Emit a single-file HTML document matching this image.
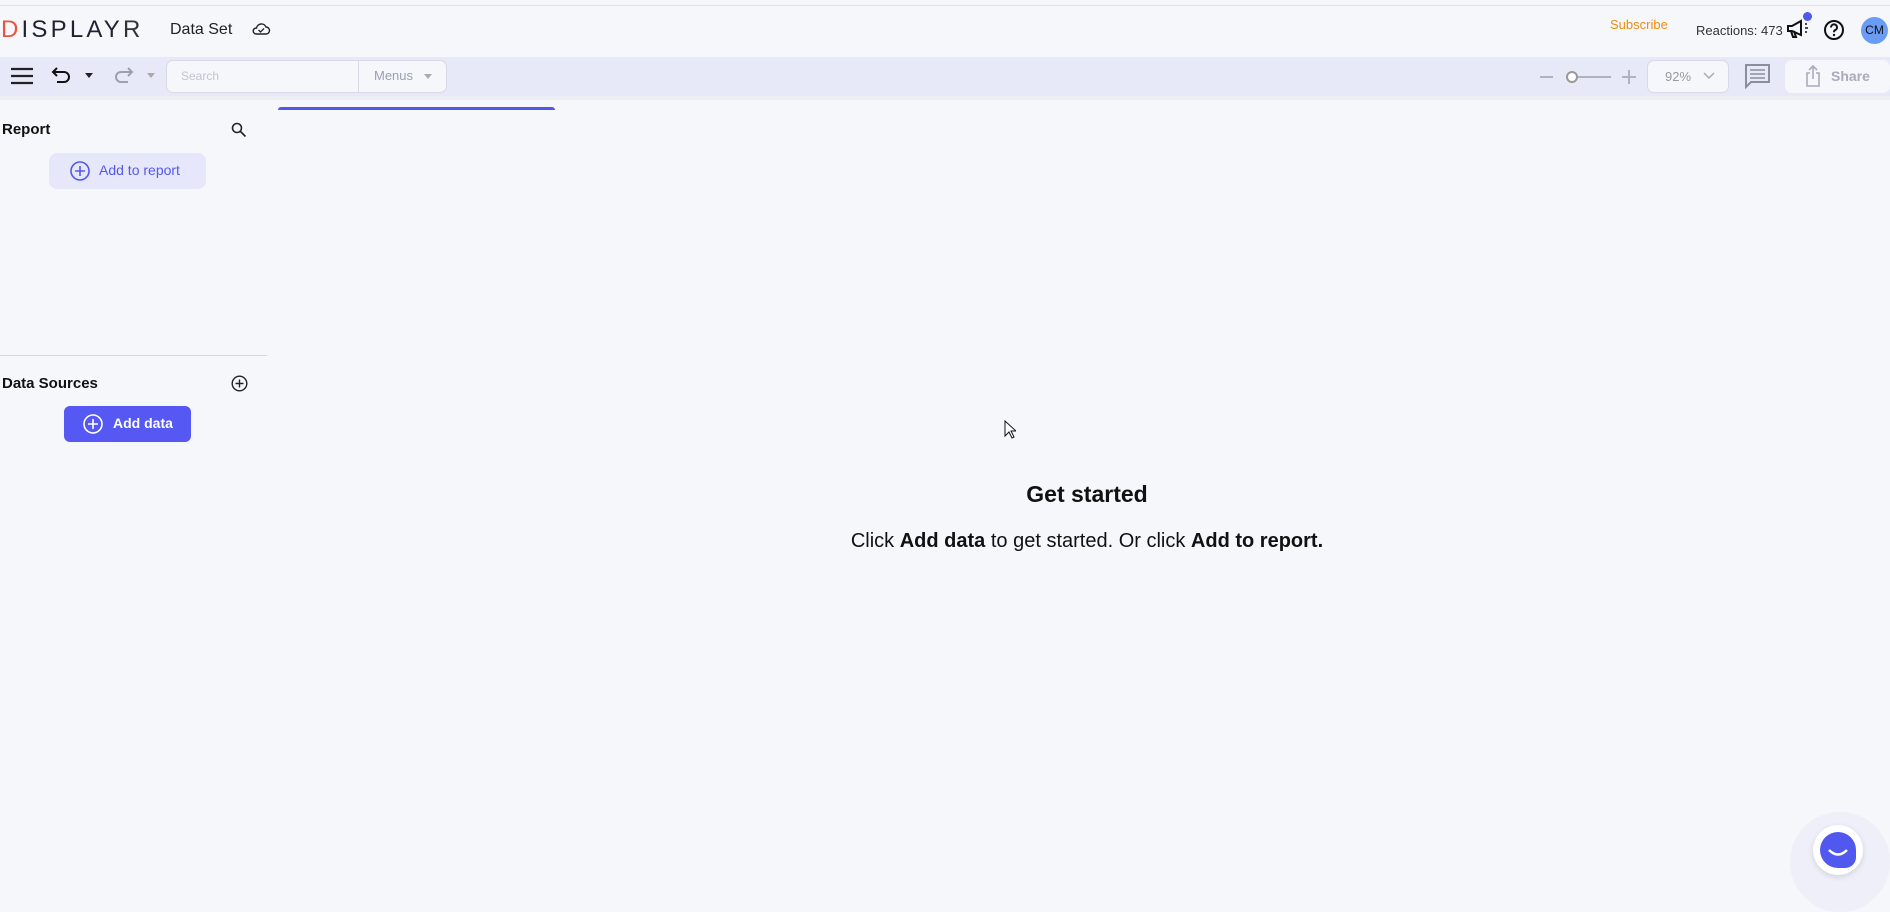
<!DOCTYPE html>
<html><head><meta charset="utf-8"><style>
*{margin:0;padding:0;box-sizing:border-box}
body{width:1890px;height:881px;background:#f6f7fb;font-family:"Liberation Sans",sans-serif;position:relative;overflow:hidden;color:#111}
.a{position:absolute}
</style></head><body>
<div class="a" style="left:0;top:5px;width:1890px;height:1px;background:#e2e3ea"></div>
<!-- logo -->
<div class="a" style="left:1px;top:15px;font-size:24px;letter-spacing:3.2px;color:#1e2330;line-height:30px;white-space:nowrap"><span style="color:#e8553f">D</span>ISPLAY<span style="font-weight:300;color:#333">R</span></div>
<div class="a" style="left:170px;top:21px;font-size:16px;color:#222">Data Set</div>
<svg class="a" style="left:251px;top:21px" width="20" height="16" viewBox="0 0 20 16"><path d="M5 13h10a3.5 3.5 0 0 0 0-7 5 5 0 0 0-9.5 1A3 3 0 0 0 5 13z" fill="none" stroke="#222" stroke-width="1.4"/><path d="M7.5 9l2 2 3.5-3.5" fill="none" stroke="#222" stroke-width="1.3"/></svg>
<div class="a" style="left:1610px;top:17px;font-size:13px;color:#f08c10">Subscribe</div>
<div class="a" style="left:1696px;top:23px;font-size:13px;color:#333">Reactions: 473</div>
<svg class="a" style="left:1786px;top:18px" width="24" height="22" viewBox="0 0 24 22"><path d="M2 8h4l9-5v14l-9-4H2z" fill="none" stroke="#111" stroke-width="2"/><path d="M5 13l2 6h3l-2-6" fill="none" stroke="#111" stroke-width="2"/><path d="M19 6h2M19 10h3M19 14h2" stroke="#111" stroke-width="1.5"/></svg>
<div class="a" style="left:1803px;top:12px;width:9px;height:9px;border-radius:50%;background:#5058f0"></div>
<svg class="a" style="left:1823px;top:19px" width="22" height="22" viewBox="0 0 22 22"><circle cx="11" cy="11" r="9" fill="none" stroke="#111" stroke-width="2"/><path d="M8 8.5a3 3 0 1 1 4 2.7c-.8.4-1 1-1 2" fill="none" stroke="#111" stroke-width="2"/><circle cx="11" cy="16" r="1.2" fill="#111"/></svg>
<div class="a" style="left:1861px;top:17px;width:27px;height:27px;border-radius:50%;background:#6a9cf5;font-size:12px;line-height:27px;text-align:center;color:#111">CM</div>
<!-- toolbar -->
<div class="a" style="left:0;top:57px;width:1890px;height:39px;background:#e8e9f8"></div>
<div class="a" style="left:0;top:96px;width:1890px;height:4px;background:#eceef3"></div>
<svg class="a" style="left:10px;top:67px" width="24" height="18"><path d="M1 2h22M1 9h22M1 16h22" stroke="#222" stroke-width="2.2"/></svg>
<svg class="a" style="left:51px;top:65px" width="22" height="20" viewBox="0 0 22 20"><path d="M6 3L2 7l4 4M2 7h11a5 5 0 0 1 0 10H6" fill="none" stroke="#111" stroke-width="2"/></svg>
<div class="a" style="left:85px;top:73px;border:4px solid transparent;border-top:5px solid #222"></div>
<svg class="a" style="left:112px;top:65px" width="22" height="20" viewBox="0 0 22 20"><path d="M16 3l4 4-4 4M20 7H9a5 5 0 0 0 0 10h7" fill="none" stroke="#9aa0b0" stroke-width="2"/></svg>
<div class="a" style="left:147px;top:73px;border:4px solid transparent;border-top:5px solid #aaa"></div>
<div class="a" style="left:166px;top:60px;width:281px;height:33px;border:1px solid #d8d9e4;border-radius:7px;background:#f6f7fb"></div>
<div class="a" style="left:358px;top:60px;width:1px;height:33px;background:#d8d9e4"></div>
<div class="a" style="left:181px;top:69px;font-size:12px;color:#c0c4cf">Search</div>
<div class="a" style="left:374px;top:68px;font-size:13px;color:#9aa0b0">Menus</div>
<div class="a" style="left:424px;top:74px;border:4px solid transparent;border-top:5px solid #aaa"></div>
<div class="a" style="left:1540px;top:76px;width:13px;height:2px;background:#b0b3bd"></div>
<div class="a" style="left:1566px;top:76px;width:45px;height:2px;background:#b0b3bd"></div>
<div class="a" style="left:1566px;top:71px;width:12px;height:12px;border-radius:50%;border:2px solid #999;background:#fff"></div>
<div class="a" style="left:1622px;top:76px;width:14px;height:2px;background:#b0b3bd"></div>
<div class="a" style="left:1628px;top:70px;width:2px;height:14px;background:#b0b3bd"></div>
<div class="a" style="left:1647px;top:60px;width:82px;height:33px;border:1px solid #d8d9e4;border-radius:7px;background:#f6f7fb"></div>
<div class="a" style="left:1665px;top:69px;font-size:13px;color:#999">92%</div>
<svg class="a" style="left:1703px;top:72px" width="12" height="8"><path d="M1 1l5 5 5-5" fill="none" stroke="#aaa" stroke-width="1.5"/></svg>
<svg class="a" style="left:1744px;top:63px" width="27" height="26" viewBox="0 0 27 26"><path d="M2 2h23v17H7l-5 5z" fill="none" stroke="#8a8f9c" stroke-width="2"/><path d="M6 7h15M6 11h15M6 15h15" stroke="#8a8f9c" stroke-width="1.6"/></svg>
<div class="a" style="left:1785px;top:60px;width:105px;height:33px;border-radius:7px;background:#f6f7fb"></div>
<svg class="a" style="left:1805px;top:64px" width="16" height="24" viewBox="0 0 16 24"><path d="M5 9H2v13h12V9h-3M8 15V2M4 6l4-4 4 4" fill="none" stroke="#aab" stroke-width="1.6"/></svg>
<div class="a" style="left:1831px;top:68px;font-size:14px;font-weight:bold;color:#aab">Share</div>
<div class="a" style="left:278px;top:107px;width:277px;height:3px;border-radius:3px 3px 0 0;background:#5058e8"></div>
<!-- sidebar -->
<div class="a" style="left:2px;top:121px;font-size:15px;font-weight:bold">Report</div>
<svg class="a" style="left:231px;top:122px" width="16" height="16"><circle cx="6" cy="6" r="4.5" fill="none" stroke="#222" stroke-width="1.6"/><path d="M9.5 9.5l5 5" stroke="#222" stroke-width="1.6"/></svg>
<div class="a" style="left:49px;top:153px;width:157px;height:36px;border-radius:8px;background:#e6e7fa"></div>
<svg class="a" style="left:70px;top:161px" width="20" height="20"><circle cx="10" cy="10" r="9" fill="none" stroke="#5558e8" stroke-width="1.6"/><path d="M10 5v10M5 10h10" stroke="#5558e8" stroke-width="1.6"/></svg>
<div class="a" style="left:99px;top:162px;font-size:14px;color:#5558e8">Add to report</div>
<div class="a" style="left:0;top:355px;width:267px;height:1px;background:#d8d9de"></div>
<div class="a" style="left:2px;top:375px;font-size:15px;font-weight:bold">Data Sources</div>
<svg class="a" style="left:231px;top:375px" width="17" height="17"><circle cx="8.5" cy="8.5" r="7.3" fill="none" stroke="#222" stroke-width="1.4"/><path d="M8.5 4.5v8M4.5 8.5h8" stroke="#222" stroke-width="1.4"/></svg>
<div class="a" style="left:64px;top:406px;width:127px;height:36px;border-radius:6px;background:#5558f2"></div>
<svg class="a" style="left:83px;top:414px" width="20" height="20"><circle cx="10" cy="10" r="9" fill="none" stroke="#fff" stroke-width="1.6"/><path d="M10 5v10M5 10h10" stroke="#fff" stroke-width="1.6"/></svg>
<div class="a" style="left:113px;top:415px;font-size:14px;font-weight:bold;color:#fff">Add data</div>
<!-- center -->
<div class="a" style="left:0;width:2174px;top:481px;text-align:center;font-size:23px;font-weight:bold">Get started</div>
<div class="a" style="left:0;width:2174px;top:530px;text-align:center;font-size:20px">Click <b>Add data</b> to get started. Or click <b>Add to report.</b></div>
<svg class="a" style="left:1004px;top:420px" width="12" height="19" viewBox="0 0 12 19"><path d="M1 1v15l4-4 3 6 2-1-3-6h5z" fill="#fff" stroke="#111" stroke-width="1"/></svg>
<!-- chat -->
<div class="a" style="left:1790px;top:812px;width:100px;height:100px;border-radius:50%;background:#eeeff8"></div>
<div class="a" style="left:1813px;top:825px;width:50px;height:50px;border-radius:50%;background:#fff;box-shadow:0 2px 6px rgba(0,0,0,.12)"></div>
<div class="a" style="left:1820px;top:832px;width:36px;height:36px;border-radius:50% 50% 30% 50%;background:#5058f0"></div>
<svg class="a" style="left:1826px;top:848px" width="24" height="12"><path d="M3 2q9 9 18 0" fill="none" stroke="#fff" stroke-width="2.4"/></svg>
</body></html>
